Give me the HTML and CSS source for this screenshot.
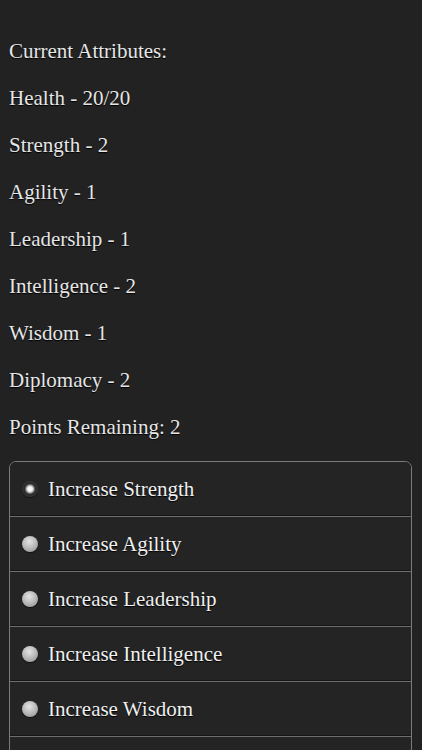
FILE: index.html
```html
<!DOCTYPE html>
<html>
<head>
<meta charset="utf-8">
<link rel="stylesheet" href="styles.css">
</head>
<body>
<div class="page">
  <p class="line">Current Attributes:</p>
  <p class="line">Health - 20/20</p>
  <p class="line">Strength - 2</p>
  <p class="line">Agility - 1</p>
  <p class="line">Leadership - 1</p>
  <p class="line">Intelligence - 2</p>
  <p class="line">Wisdom - 1</p>
  <p class="line">Diplomacy - 2</p>
  <p class="line">Points Remaining: 2</p>
  <div class="choices">
    <label class="choice"><span class="radio radio-on"></span><span class="choice-text">Increase Strength</span></label>
    <label class="choice"><span class="radio"></span><span class="choice-text">Increase Agility</span></label>
    <label class="choice"><span class="radio"></span><span class="choice-text">Increase Leadership</span></label>
    <label class="choice"><span class="radio"></span><span class="choice-text">Increase Intelligence</span></label>
    <label class="choice"><span class="radio"></span><span class="choice-text">Increase Wisdom</span></label>
    <label class="choice"><span class="radio"></span><span class="choice-text">Increase Diplomacy</span></label>
  </div>
</div>
</body>
</html>
```
FILE: styles.css
```css
html, body {
  margin: 0;
  padding: 0;
  background: #222222;
  height: 100%;
  overflow: hidden;
}
.page {
  padding: 39px 10px 0 9px;
  font-family: "Liberation Serif", "Times New Roman", serif;
  font-size: 21px;
  color: #e6e6e6;
  text-shadow: 0 1px 1px #000;
}
.line {
  margin: 0 0 23px 0;
  line-height: 24px;
}
.choices {
  margin-top: -1px;
  border: 1px solid #7a7a7a;
  border-radius: 7px;
  overflow: hidden;
}
.choice {
  display: flex;
  align-items: center;
  gap: 10px;
  height: 53px;
  padding-left: 12px;
  border-top: 1px solid #6e6e6e;
  border-bottom: 1px solid #151515;
  background: #242424;
  color: #f0f0f0;
}
.choice:first-child {
  border-top: none;
  height: 53px;
}
.radio {
  width: 16px;
  height: 16px;
  border-radius: 50%;
  flex: none;
  background: radial-gradient(circle at 45% 35%, #e4e4e4 0%, #bdbdbd 45%, #8a8a8a 100%);
  box-shadow: 0 1px 1px rgba(0,0,0,0.5);
}
.radio-on {
  background: radial-gradient(circle at 50% 50%, #ffffff 0%, #f0f0f0 22%, #9a9a9a 34%, #2a2a2a 48%, #3a3a3a 80%, #5a5a5a 100%);
}
.choice-text {
  line-height: 24px;
}
```
